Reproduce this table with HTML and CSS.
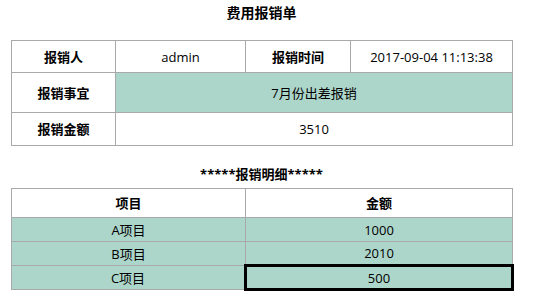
FILE: index.html
```html
<!DOCTYPE html>
<html lang="zh-CN">
<head>
    <meta charset="UTF-8">
    <title>费用报销单</title>
    <link rel="stylesheet" href="styles.css">
</head>
<body>
    <div class="sheet">
        <h3 class="sheet_title">费用报销单</h3>
        <table class="info_table">
            <colgroup>
                <col class="c_label">
                <col class="c_user">
                <col class="c_label2">
                <col class="c_time">
            </colgroup>
            <tr class="r_user">
                <th>报销人</th>
                <td>admin</td>
                <th>报销时间</th>
                <td>2017-09-04 11:13:38</td>
            </tr>
            <tr class="r_reason">
                <th>报销事宜</th>
                <td colspan="3" class="hl">7月份出差报销</td>
            </tr>
            <tr class="r_total">
                <th>报销金额</th>
                <td colspan="3">3510</td>
            </tr>
        </table>

        <h4 class="sub_title">*****报销明细*****</h4>
        <table class="detail_table">
            <colgroup>
                <col class="c_item">
                <col class="c_money">
            </colgroup>
            <tr class="r_head">
                <th>项目</th>
                <th>金额</th>
            </tr>
            <tr class="hl">
                <td>A项目</td>
                <td>1000</td>
            </tr>
            <tr class="hl">
                <td>B项目</td>
                <td>2010</td>
            </tr>
            <tr class="hl">
                <td>C项目</td>
                <td class="editing">500</td>
            </tr>
        </table>
    </div>
</body>
</html>
```

FILE: styles.css
```css
body {
    margin: 0;
    background: #fff;
    color: #000;
    font-family: "Open Sans", "Noto Sans CJK SC", sans-serif;
    font-size: 13px;
}
.sheet {
    width: 501px;
    margin: 0 11px;
}
.sheet_title {
    margin: 0;
    padding-top: 4px;
    height: 36px;
    font-size: 14px;
    line-height: 18px;
    text-align: center;
}
.sub_title {
    margin: 0;
    padding-top: 19px;
    height: 23px;
    font-size: 13px;
    line-height: 18px;
    text-align: center;
}
table {
    width: 501px;
    border-collapse: collapse;
    table-layout: fixed;
}
th, td {
    border: 1px solid #a9a9a9;
    padding: 0;
    text-align: center;
    line-height: 18px;
}
th {
    font-weight: bold;
}
.hl, .hl td {
    background-color: #add6ca;
}
/* 基本信息 */
.c_label { width: 104px; }
.c_user { width: 130px; }
.c_label2 { width: 105px; }
.c_time { width: 162px; }
.r_user { height: 32px; }
.r_reason { height: 40px; }
.r_total { height: 33px; }
/* 明细 */
.c_item { width: 234px; }
.c_money { width: 267px; }
.r_head { height: 29px; }
.detail_table .hl { height: 24px; }
.detail_table td.editing {
    border: 3px solid #000;
}
```
